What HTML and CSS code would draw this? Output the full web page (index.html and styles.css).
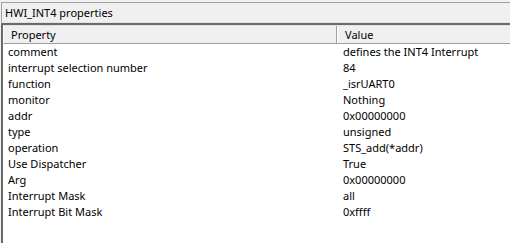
FILE: index.html
```html
<!DOCTYPE html>
<html>
<head>
<meta charset="utf-8">
<link rel="stylesheet" href="styles.css">
</head>
<body>
<div class="panel">
  <div class="title">HWI_INT4 properties</div>
  <div class="grid">
    <div class="head">
      <div class="hcell c1">Property</div>
      <div class="hcell c2">Value</div>
    </div>
    <div class="rows">
      <div class="row"><span class="c1">comment</span><span class="c2">defines the INT4 Interrupt</span></div>
      <div class="row"><span class="c1">interrupt selection number</span><span class="c2">84</span></div>
      <div class="row"><span class="c1">function</span><span class="c2">_isrUART0</span></div>
      <div class="row"><span class="c1">monitor</span><span class="c2">Nothing</span></div>
      <div class="row"><span class="c1">addr</span><span class="c2">0x00000000</span></div>
      <div class="row"><span class="c1">type</span><span class="c2">unsigned</span></div>
      <div class="row"><span class="c1">operation</span><span class="c2">STS_add(*addr)</span></div>
      <div class="row"><span class="c1">Use Dispatcher</span><span class="c2">True</span></div>
      <div class="row"><span class="c1">Arg</span><span class="c2">0x00000000</span></div>
      <div class="row"><span class="c1">Interrupt Mask</span><span class="c2">all</span></div>
      <div class="row"><span class="c1">Interrupt Bit Mask</span><span class="c2">0xffff</span></div>
    </div>
  </div>
</div>
</body>
</html>
```
FILE: styles.css
```css
html, body {
  margin: 0;
  padding: 0;
  background: #f0f0f0;
  width: 510px;
  height: 243px;
  overflow: hidden;
}
.panel {
  display: flex;
  flex-direction: column;
  height: 243px;
  padding-top: 2px;
  box-sizing: border-box;
  font-family: "Noto Sans", "Open Sans", sans-serif;
  font-size: 11px;
  color: #000;
}
.title {
  margin-left: 1px;
  height: 19px;
  border-top: 1px solid #a0a0a0;
  border-left: 1px solid #a0a0a0;
  border-bottom: 1px solid #e3e3e3;
  padding-left: 3px;
  line-height: 19px;
  background: #f0f0f0;
}
.grid {
  flex: 1;
  border-top: 2px solid #696969;
  border-left: 2px solid #696969;
  margin-left: 1px;
  background: #fff;
  display: flex;
  flex-direction: column;
}
.head {
  display: flex;
  height: 17px;
  background: #f0f0f0;
  border-top: 1px solid #e3e3e3;
  border-left: 1px solid #fff;
  border-bottom: 1px solid #a0a0a0;
  line-height: 17px;
}
.hcell.c1 {
  width: 325px;
  padding-left: 7px;
  border-right: 1px solid #a0a0a0;
  box-shadow: 1px 0 0 #fff;
}
.hcell.c2 {
  padding-left: 8px;
}
.rows {
  display: flex;
  flex-direction: column;
}
.row {
  display: flex;
  height: 16px;
  line-height: 16px;
}
.row .c1 {
  width: 335px;
  padding-left: 5px;
  flex: none;
}
.row .c2 {
  padding-left: 0;
}
```
